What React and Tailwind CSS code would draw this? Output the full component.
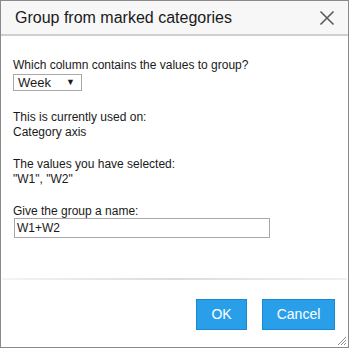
export default function App() {
  return (
    <div
      className="w-[349px] h-[348px] bg-white border border-[#8a8a8a] flex flex-col relative text-[#1a1a1a]"
      style={{ fontFamily: '"Liberation Sans", Arial, sans-serif' }}
    >
      <div className="h-[35px] bg-[#f7f7f7] border-b-2 border-[#cfcfcf] flex items-center justify-between pl-[14px] pr-[13px] shrink-0">
        <span className="text-[16px] leading-none mt-[1px]">Group from marked categories</span>
        <svg width="16" height="16" viewBox="0 0 16 16" className="text-[#5a5a5a]">
          <path d="M1.5 1.5 L14.5 14.5 M14.5 1.5 L1.5 14.5" stroke="currentColor" strokeWidth="1.6" />
        </svg>
      </div>

      <div className="flex-1 px-[12px] pt-[22px] text-[12px] leading-[15px]">
        <div>Which column contains the values to group?</div>
        <div className="mt-[1px] w-[69px] h-[17px] border border-[#a9a9a9] flex items-center justify-between pl-[4px] pr-[6px] text-[13px]">
          <span>Week</span>
          <span className="text-[9px]">▼</span>
        </div>

        <div className="mt-[19px]">This is currently used on:</div>
        <div>Category axis</div>

        <div className="mt-[17px]">The values you have selected:</div>
        <div>"W1", "W2"</div>

        <div className="mt-[17px] leading-[14px]">Give the group a name:</div>
        <div className="w-[256px] h-[20px] border border-[#a9a9a9] flex items-center pl-[2px] text-[12px] ml-[1px]">
          W1+W2
        </div>
      </div>

      <div className="h-[2px] mx-[1px] bg-gradient-to-r from-[#f4f4f4] via-[#dcdcdc] to-[#f0f0f0] shrink-0" />

      <div className="h-[67px] flex justify-end items-start pt-[19px] pr-[13px] gap-[15px] shrink-0">
        <button className="w-[51px] h-[31px] bg-[#2a9fe9] border border-[#1c88cf] text-white text-[14px]">OK</button>
        <button className="w-[73px] h-[31px] bg-[#2a9fe9] border border-[#1c88cf] text-white text-[14px]">Cancel</button>
      </div>

      <svg width="12" height="12" viewBox="0 0 12 12" className="absolute right-[1px] bottom-[1px]">
        <path d="M11 3 L3 11 M11 6 L6 11 M11 9 L9 11" stroke="#8a8a8a" strokeWidth="1" />
      </svg>
    </div>
  );
}
